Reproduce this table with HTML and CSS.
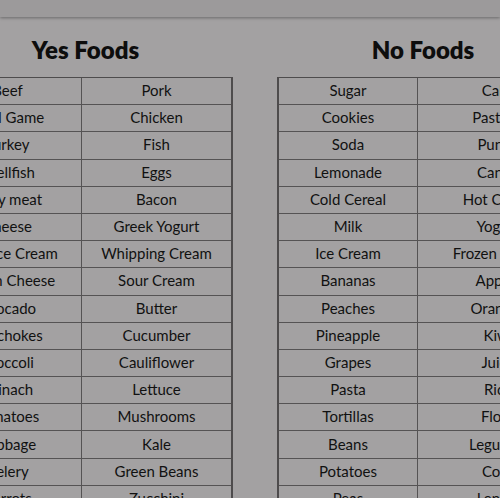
FILE: index.html
```html
<!DOCTYPE html>
<html>
<head>
<meta charset="utf-8">
<link rel="stylesheet" href="styles.css">
</head>
<body>
<div class="band"></div>
<div class="page">
  <section class="block block-yes">
    <h1 class="title title-yes">Yes Foods</h1>
    <div class="grid grid-yes">
      <div class="cell">Beef</div><div class="cell">Pork</div>
      <div class="cell">Wild Game</div><div class="cell">Chicken</div>
      <div class="cell">Turkey</div><div class="cell">Fish</div>
      <div class="cell">Shellfish</div><div class="cell">Eggs</div>
      <div class="cell">Fatty meat</div><div class="cell">Bacon</div>
      <div class="cell">Cheese</div><div class="cell">Greek Yogurt</div>
      <div class="cell">Keto Ice Cream</div><div class="cell">Whipping Cream</div>
      <div class="cell">Cream Cheese</div><div class="cell">Sour Cream</div>
      <div class="cell">Avocado</div><div class="cell">Butter</div>
      <div class="cell">Artichokes</div><div class="cell">Cucumber</div>
      <div class="cell">Broccoli</div><div class="cell">Cauliflower</div>
      <div class="cell">Spinach</div><div class="cell">Lettuce</div>
      <div class="cell">Tomatoes</div><div class="cell">Mushrooms</div>
      <div class="cell">Cabbage</div><div class="cell">Kale</div>
      <div class="cell">Celery</div><div class="cell">Green Beans</div>
      <div class="cell">Carrots</div><div class="cell">Zucchini</div>
    </div>
  </section>
  <section class="block block-no">
    <h1 class="title title-no">No Foods</h1>
    <div class="grid grid-no">
      <div class="cell">Sugar</div><div class="cell">Cake</div>
      <div class="cell">Cookies</div><div class="cell">Pastries</div>
      <div class="cell">Soda</div><div class="cell">Punch</div>
      <div class="cell">Lemonade</div><div class="cell">Candy</div>
      <div class="cell">Cold Cereal</div><div class="cell">Hot Cereal</div>
      <div class="cell">Milk</div><div class="cell">Yogurt</div>
      <div class="cell">Ice Cream</div><div class="cell">Frozen Yogurt</div>
      <div class="cell">Bananas</div><div class="cell">Apples</div>
      <div class="cell">Peaches</div><div class="cell">Oranges</div>
      <div class="cell">Pineapple</div><div class="cell">Kiwi</div>
      <div class="cell">Grapes</div><div class="cell">Juice</div>
      <div class="cell">Pasta</div><div class="cell">Rice</div>
      <div class="cell">Tortillas</div><div class="cell">Flour</div>
      <div class="cell">Beans</div><div class="cell">Legumes</div>
      <div class="cell">Potatoes</div><div class="cell">Corn</div>
      <div class="cell">Peas</div><div class="cell">Lentils</div>
    </div>
  </section>
</div>
</body>
</html>
```
FILE: styles.css
```css
html, body {
  margin: 0;
  padding: 0;
  width: 500px;
  height: 498px;
  overflow: hidden;
  background: #a3a1a2;
  font-family: Lato, "Open Sans", sans-serif;
  color: #111;
}
.band {
  height: 17px;
  background: #9c9a9b;
  box-shadow: 0 1px 3px rgba(0, 0, 0, 0.35);
  position: relative;
}
.page {
  display: flex;
  gap: 44px;
  margin-left: -66px;
}
.block {
  flex: none;
  display: flex;
  flex-direction: column;
}
.title {
  margin: 0;
  height: 60px;
  line-height: 66px;
  font-size: 24px;
  font-weight: 800;
  text-align: center;
  color: #0d0d0d;
}
.title-yes { padding-left: 4px; }
.title-no { padding-right: 9px; }
.grid {
  display: grid;
  grid-auto-rows: 27.2px;
  border-top: 1px solid #4e4c4d;
  box-sizing: border-box;
}
.grid-yes {
  grid-template-columns: 148px 149px;
  border-right: 2px solid #4e4c4d;
}
.grid-no {
  grid-template-columns: 139px 160px;
  border-left: 2px solid #4e4c4d;
}
.cell {
  box-sizing: border-box;
  border-bottom: 1px solid #555354;
  display: flex;
  align-items: center;
  justify-content: center;
  font-size: 15px;
  white-space: nowrap;
  padding-bottom: 2px;
}
.cell:nth-child(odd) {
  border-right: 1px solid #555354;
}
```
